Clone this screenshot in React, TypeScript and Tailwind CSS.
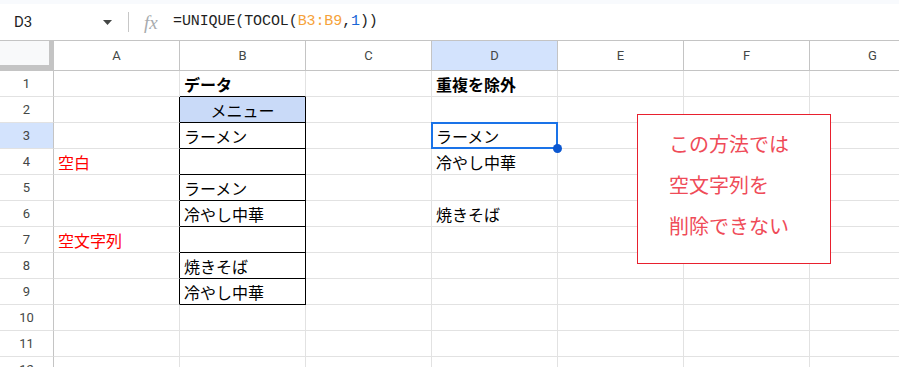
import React from "react";

type Cell = { t: string; bold?: boolean; red?: boolean; center?: boolean };
const data: Record<number, Record<string, Cell>> = {
  1: { B: { t: "データ", bold: true }, D: { t: "重複を除外", bold: true } },
  2: { B: { t: "メニュー", center: true } },
  3: { B: { t: "ラーメン" }, D: { t: "ラーメン" } },
  4: { A: { t: "空白", red: true }, D: { t: "冷やし中華" } },
  5: { B: { t: "ラーメン" } },
  6: { B: { t: "冷やし中華" }, D: { t: "焼きそば" } },
  7: { A: { t: "空文字列", red: true } },
  8: { B: { t: "焼きそば" } },
  9: { B: { t: "冷やし中華" } },
};
const cols = ["A", "B", "C", "D", "E", "F", "G"];
const rows = [1, 2, 3, 4, 5, 6, 7, 8, 9, 10, 11, 12];

function cellClass(col: string, row: number): string {
  const inTable = row >= 2 && row <= 9;
  let rightBlack = false;
  let bottomBlack = false;
  if (col === "A" && inTable) rightBlack = true;
  if (col === "B" && inTable) {
    rightBlack = true;
    bottomBlack = true;
  }
  if (col === "B" && row === 1) bottomBlack = true;
  const parts = ["h-[26px] flex items-center px-[4px] overflow-hidden whitespace-nowrap border-r border-b"];
  parts.push(rightBlack ? "border-r-black" : "border-r-[#e2e2e2]");
  parts.push(bottomBlack ? "border-b-black" : "border-b-[#e2e2e2]");
  if (col === "B" && row === 2) parts.push("bg-[#c9daf8] justify-center");
  return parts.join(" ");
}

export default function App() {
  return (
    <div className="relative w-[899px] h-[367px] overflow-hidden bg-white font-['Roboto',sans-serif]">
      <div className="h-[4px] bg-[#f8fafd]" />
      <div className="h-[37px] flex items-center border-b border-[#c4c4c4]">
        <div className="w-[128px] flex items-center pl-[14px] pr-[16px] justify-between">
          <span className="text-[15px] text-[#1f1f1f] font-['Roboto',sans-serif]">D3</span>
          <svg width="9" height="5" viewBox="0 0 9 5" className="mr-[0px]">
            <path d="M0 0 L9 0 L4.5 5 Z" fill="#444746" />
          </svg>
        </div>
        <div className="w-px h-[20px] bg-[#c7c7c7]" />
        <span className="ml-[15px] w-[26px] text-[19px] italic text-[#a8abae] font-['Liberation_Serif',serif] leading-none">
          fx
        </span>
        <span className="ml-[3px] text-[15px] text-[#1f1f1f] font-['Liberation_Mono',monospace] tracking-[-0.1px]">
          =UNIQUE(TOCOL(<span className="text-[#f6a23a]">B3:B9</span>,<span className="text-[#1a66d6]">1</span>))
        </span>
      </div>
      <div className="grid grid-cols-[54px_repeat(7,126px)]">
        <div className="h-[30px] bg-[#f8f9fa] border-r-[5px] border-b-[6px] border-[#c4c4c4]" />
        {cols.map((c) => (
          <div
            key={c}
            className={
              "h-[30px] flex items-center justify-center text-[13px] text-[#444746] border-r border-b border-[#c4c4c4] " +
              (c === "D" ? "bg-[#d3e3fd]" : "bg-white")
            }
          >
            {c}
          </div>
        ))}
        {rows.map((r) => (
          <React.Fragment key={r}>
            <div
              className={
                "h-[26px] flex items-center justify-center text-[13px] text-[#444746] border-r border-r-[#c4c4c4] border-b border-b-[#e2e2e2] " +
                (r === 3 ? "bg-[#d3e3fd]" : "bg-white")
              }
            >
              {r}
            </div>
            {cols.map((c) => {
              const cell = data[r]?.[c];
              return (
                <div key={c} className={cellClass(c, r)}>
                  {cell && (
                    <span
                      className={
                        "text-[16px] font-['Noto_Sans_CJK_JP',sans-serif] " +
                        (cell.bold ? "font-bold " : "") +
                        (cell.red ? "text-[#ff0000]" : "text-black")
                      }
                    >
                      {cell.t}
                    </span>
                  )}
                </div>
              );
            })}
          </React.Fragment>
        ))}
      </div>
      {/* selection */}
      <div className="absolute left-[431px] top-[122px] w-[127px] h-[27px] border-2 border-[#1a73e8] pointer-events-none" />
      <div className="absolute left-[553px] top-[144px] w-[9px] h-[9px] rounded-full bg-[#0b57d0]" />
      {/* text box */}
      <div className="absolute left-[637px] top-[114px] w-[194px] h-[150px] border border-[#e8202e] bg-white pl-[31px] pt-[8px]">
        <div className="text-[20px] leading-[41px] text-[#ef4b58] font-['Noto_Sans_CJK_JP',sans-serif]">
          <div>この方法では</div>
          <div>空文字列を</div>
          <div>削除できない</div>
        </div>
      </div>
    </div>
  );
}
